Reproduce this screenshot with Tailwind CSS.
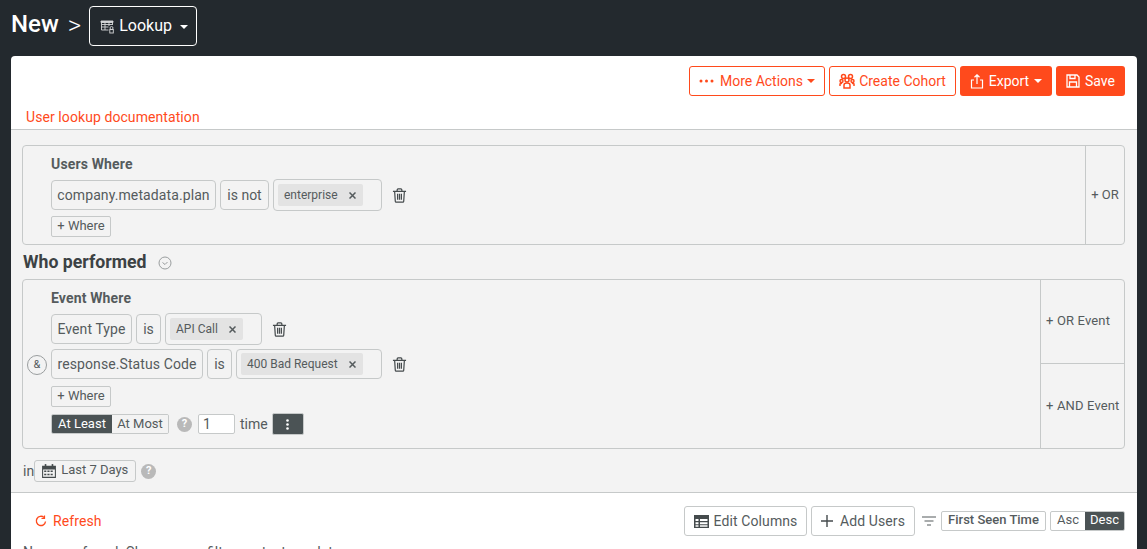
<!DOCTYPE html>
<html lang="en">
<head>
<meta charset="UTF-8">
<title>New Lookup</title>
<script src="https://cdn.jsdelivr.net/npm/@tailwindcss/browser@4"></script>
</head>
<body class="h-[549px] overflow-hidden bg-[#23292e] font-['Roboto',sans-serif] text-[#555b5d]">

<!-- Top bar -->
<div class="h-[56px] pl-[11px] pt-[6px] flex items-start">
  <span class="text-[24px] leading-[36px] font-medium text-white">New</span>
  <span class="text-[26px] leading-[38px] text-white ml-[9px] font-light">&gt;</span>
  <button class="ml-[8px] w-[108px] h-[40px] border border-white rounded-[4px] flex items-center pl-[10px] text-white text-[16px]">
    <svg class="w-[15px] h-[15px] mr-[4px]" viewBox="0 0 15 15" fill="none" stroke="#d4d6d7" stroke-width="0.900"><path d="M1 2h12v1.500H1z" fill="#d4d6d7"/><path d="M1.500 3v8h7M5 3v8M9 3v4M1.500 5.500h11M1.500 8h7M12.500 3v3"/><circle cx="11.500" cy="9" r="1.500"/><rect x="9.800" y="10.500" width="3.500" height="3.500"/></svg>
    Lookup
    <span class="ml-[8px] mt-[2px] border-x-[4px] border-x-transparent border-t-[4px] border-t-white"></span>
  </button>
</div>

<!-- Card -->
<div class="mr-[10px] ml-[11px] bg-white rounded-t-[4px] h-[493px] overflow-hidden">

  <div class="h-[74px] border-b border-[#c6c9c9] relative">
    <div class="flex justify-end gap-[4px] pt-[10px] pr-[12px] text-[14px]">
      <button class="h-[30px] w-[136px] border border-[#ff4a1c] rounded-[3px] text-[#ff4a1c] bg-white flex items-center justify-center">
        <svg class="w-[15px] h-[4px] mr-[6px]" viewBox="0 0 15 4" fill="#ff4a1c"><circle cx="2" cy="2" r="1.500"/><circle cx="7.500" cy="2" r="1.500"/><circle cx="13" cy="2" r="1.500"/></svg>
        More Actions
        <span class="ml-[4px] border-x-[4px] border-x-transparent border-t-[4px] border-t-[#ff4a1c]"></span>
      </button>
      <button class="h-[30px] w-[127px] border border-[#ff4a1c] rounded-[3px] text-[#ff4a1c] bg-white flex items-center justify-center">
        <svg class="w-[16px] h-[16px] mr-[4px]" viewBox="0 0 16 16" fill="none" stroke="#ff4a1c" stroke-width="1.500"><circle cx="4.500" cy="3.500" r="2"/><circle cx="11.500" cy="3.500" r="2"/><circle cx="8" cy="7" r="2"/><circle cx="2.500" cy="8" r="1.500"/><circle cx="13.500" cy="8" r="1.500"/><path d="M5 15v-3c0-1 1-2 3-2s3 1 3 2v3zM1 13v-2l2-1M15 13v-2l-2-1"/></svg>
        Create Cohort
      </button>
      <button class="h-[30px] w-[92px] rounded-[3px] text-white bg-[#ff4a1c] flex items-center justify-center">
        <svg class="w-[14px] h-[15px] mr-[5px]" viewBox="0 0 14 15" fill="none" stroke="#fff" stroke-width="1.200"><path d="M4 6H1.500v8h11V6H10M7 10V1M4.500 3.200 7 .8l2.500 2.400"/></svg>
        Export
        <span class="ml-[5px] border-x-[4px] border-x-transparent border-t-[4px] border-t-white"></span>
      </button>
      <button class="h-[30px] w-[69px] rounded-[3px] text-white bg-[#ff4a1c] flex items-center justify-center">
        <svg class="w-[14px] h-[14px] mr-[5px]" viewBox="0 0 14 14" fill="none" stroke="#fff" stroke-width="1.300"><path d="M1 1h10l2 2v10H1z"/><path d="M4 1v3.500h5V1M3.500 13V8h7v5"/></svg>
        Save
      </button>
    </div>
    <a class="absolute left-[15px] top-[53px] text-[14px] leading-[17px] tracking-[0.08px] text-[#ff4a1c]">User lookup documentation</a>
  </div>

  <!-- Query builder -->
  <div class="h-[363px] bg-[#f3f3f3] border-b border-[#c6c9c9] pl-[11px] pr-[12px] pt-[15px] text-[14px]">

    <div class="h-[100px] border border-[#c6c9c9] rounded-[4px] flex">
      <div class="flex-1 pl-[28px] pt-[10px]">
        <div class="leading-[16px] font-bold tracking-[0.15px] h-[23px]">Users Where</div>
        <div class="flex items-center gap-[4px] h-[32px]">
          <span class="h-[30px] w-[165px] flex items-center justify-center border border-[#c6c9c9] rounded-[4px] tracking-[0.1px]">company.metadata.plan</span>
          <span class="h-[30px] w-[49px] flex items-center justify-center border border-[#c6c9c9] rounded-[4px]">is not</span>
          <span class="h-[32px] w-[109px] pl-[4px] flex items-center border border-[#c6c9c9] rounded-[4px]">
            <span class="h-[22px] w-[85px] bg-[#e3e3e3] rounded-[2px] text-[12px] pl-[6px] pr-[7px] flex items-center justify-between">enterprise
              <svg class="w-[7px] h-[7px]" viewBox="0 0 7 7" stroke="#555b5d" stroke-width="1.500"><path d="m.5.500 6 6M6.500.500l-6 6"/></svg>
            </span>
          </span>
          <svg class="w-[15px] h-[17px] ml-[6px]" viewBox="0 0 16 17" fill="none" stroke="#454b4d" stroke-width="1.300"><path d="M1 4h14M5.500 4V2.500c0-.6.400-1 1-1h3c.6 0 1 .4 1 1V4M2.800 4l.7 10.500c0 .6.500 1 1 1h7c.5 0 1-.4 1-1L13.200 4M6 6.500v6.500M8 6.500v6.500M10 6.500v6.500"/></svg>
        </div>
        <div class="mt-[5px] h-[21px] w-[60px] flex items-center justify-center border border-[#c6c9c9] rounded-[2px] text-[13px] pb-[2px]">+ Where</div>
      </div>
      <div class="w-[39px] border-l border-[#c6c9c9] flex items-center justify-center text-[13px]">+ OR</div>
    </div>

    <div class="h-[34px] flex items-center pl-[1px] font-bold text-[17.7px] text-[#3c4244]">
      Who performed
      <svg class="w-[14px] h-[14px] ml-[11px] mt-[2px]" viewBox="0 0 14 14" fill="none" stroke="#9a9e9f"><circle cx="7" cy="7" r="6"/><path d="m4.500 6.500 2.500 2 2.500-2.500"/></svg>
    </div>

    <div class="h-[170px] border border-[#c6c9c9] rounded-[4px] flex">
      <div class="flex-1 pl-[28px] pt-[10px] relative">
        <div class="leading-[16px] font-bold tracking-[0.15px] h-[23px]">Event Where</div>
        <div class="flex items-center gap-[4px] h-[32px]">
          <span class="h-[30px] w-[81px] flex items-center justify-center border border-[#c6c9c9] rounded-[4px] tracking-[0.1px]">Event Type</span>
          <span class="h-[30px] w-[25px] flex items-center justify-center border border-[#c6c9c9] rounded-[4px]">is</span>
          <span class="h-[32px] w-[97px] pl-[4px] flex items-center border border-[#c6c9c9] rounded-[4px]">
            <span class="h-[22px] w-[73px] bg-[#e3e3e3] rounded-[2px] text-[12px] pl-[6px] pr-[7px] flex items-center justify-between">API Call
              <svg class="w-[7px] h-[7px]" viewBox="0 0 7 7" stroke="#555b5d" stroke-width="1.500"><path d="m.5.500 6 6M6.500.500l-6 6"/></svg>
            </span>
          </span>
          <svg class="w-[15px] h-[17px] ml-[6px]" viewBox="0 0 16 17" fill="none" stroke="#454b4d" stroke-width="1.300"><path d="M1 4h14M5.500 4V2.500c0-.6.400-1 1-1h3c.6 0 1 .4 1 1V4M2.800 4l.7 10.500c0 .6.500 1 1 1h7c.5 0 1-.4 1-1L13.200 4M6 6.500v6.500M8 6.500v6.500M10 6.500v6.500"/></svg>
        </div>
        <div class="flex items-center gap-[4px] h-[32px] mt-[3px]">
          <span class="h-[30px] w-[152px] flex items-center justify-center border border-[#c6c9c9] rounded-[4px] tracking-[0.1px]">response.Status Code</span>
          <span class="h-[30px] w-[25px] flex items-center justify-center border border-[#c6c9c9] rounded-[4px]">is</span>
          <span class="h-[30px] w-[146px] pl-[4px] flex items-center border border-[#c6c9c9] rounded-[4px]">
            <span class="h-[22px] w-[122px] bg-[#e3e3e3] rounded-[2px] text-[12px] pl-[6px] pr-[7px] flex items-center justify-between">400 Bad Request
              <svg class="w-[7px] h-[7px]" viewBox="0 0 7 7" stroke="#555b5d" stroke-width="1.500"><path d="m.5.500 6 6M6.500.500l-6 6"/></svg>
            </span>
          </span>
          <svg class="w-[15px] h-[17px] ml-[6px]" viewBox="0 0 16 17" fill="none" stroke="#454b4d" stroke-width="1.300"><path d="M1 4h14M5.500 4V2.500c0-.6.400-1 1-1h3c.6 0 1 .4 1 1V4M2.800 4l.7 10.500c0 .6.500 1 1 1h7c.5 0 1-.4 1-1L13.200 4M6 6.500v6.500M8 6.500v6.500M10 6.500v6.500"/></svg>
        </div>
        <span class="absolute left-[4px] top-[75px] w-[20px] h-[20px] rounded-full border border-[#9a9e9f] flex items-center justify-center text-[11px]">&amp;</span>
        <div class="mt-[6px] h-[21px] w-[60px] flex items-center justify-center border border-[#c6c9c9] rounded-[2px] text-[13px] pb-[2px]">+ Where</div>
        <div class="flex items-center mt-[6px] h-[22px]">
          <div class="flex h-[20px] w-[118px] border border-[#c6c9c9] rounded-[2px] text-[13px] overflow-hidden">
            <span class="w-[60px] bg-[#4b5355] text-white flex items-center justify-center">At Least</span>
            <span class="flex-1 bg-[#f3f3f3] flex items-center justify-center">At Most</span>
          </div>
          <span class="ml-[8px] w-[15px] h-[15px] rounded-full bg-[#b9b9b9] text-white text-[11px] font-bold flex items-center justify-center">?</span>
          <span class="ml-[6px] w-[37px] h-[20px] bg-white border border-[#c6c9c9] rounded-[2px] text-[14px] pl-[4px] flex items-center">1</span>
          <span class="ml-[5px] text-[14px]">time</span>
          <span class="ml-[4px] w-[32px] h-[22px] bg-[#4b5355] border border-[#c6c9c9] rounded-[2px] flex items-center justify-center">
            <svg class="w-[3px] h-[11px]" viewBox="0 0 3 11" fill="#fff"><circle cx="1.500" cy="1.500" r="1.300"/><circle cx="1.500" cy="5.500" r="1.300"/><circle cx="1.500" cy="9.500" r="1.300"/></svg>
          </span>
        </div>
      </div>
      <div class="w-[84px] border-l border-[#c6c9c9] flex flex-col text-[13px] tracking-[0.15px]">
        <div class="h-[84px] border-b border-[#c6c9c9] flex items-center pl-[5px] pb-[2px]">+ OR Event</div>
        <div class="flex-1 flex items-center pl-[5px]">+ AND Event</div>
      </div>
    </div>

    <div class="flex items-center h-[22px] mt-[11px] pl-[1px]">
      <span>in</span>
      <span class="w-[102px] h-[22px] border border-[#c6c9c9] rounded-[3px] flex items-center pl-[6px] text-[13px]">
        <svg class="w-[16px] h-[16px] mr-[4px]" viewBox="0 0 15 15" fill="#454b4d"><path d="M1 2.500h13V14H1zM2 6v7h11V6z" fill-rule="evenodd"/><rect x="3.500" y="1" width="1.500" height="3"/><rect x="10" y="1" width="1.500" height="3"/><path d="M3 7h2v1.500H3zM6 7h2v1.500H6zM9 7h2v1.500H9zM3 10h2v1.500H3zM6 10h2v1.500H6zM9 10h2v1.500H9z"/></svg>
        <span class="-mt-[2px]">Last 7 Days</span>
      </span>
      <span class="ml-[5px] w-[15px] h-[15px] rounded-full bg-[#b9b9b9] text-white text-[11px] font-bold flex items-center justify-center">?</span>
    </div>
  </div>

  <!-- Results -->
  <div class="relative">
    <div class="flex items-center h-[30px] mt-[13px] pl-[24px] pr-[12px]">
      <svg class="w-[12px] h-[12px] mr-[6px]" viewBox="0 0 12 12" fill="none" stroke="#ff4a1c" stroke-width="1.400"><path d="M10.500 6.500A4.600 4.600 0 1 1 9 2.500"/><path d="M9.500 .5v3h-3" stroke-width="1.200"/></svg>
      <span class="text-[14px] tracking-[0.1px] text-[#ff4a1c]">Refresh</span>
      <div class="flex-1"></div>
      <button class="h-[30px] w-[123px] border border-[#c6c9c9] rounded-[3px] text-[14px] tracking-[0.1px] flex items-center justify-center">
        <svg class="w-[15px] h-[13px] mr-[5px]" viewBox="0 0 15 13" fill="#454b4d"><path fill-rule="evenodd" d="M0 0h15v13H0zM1.500 4v2h3V4zM6 4v2h7.500V4zM1.500 7.200v2h3v-2zM6 7.200v2h7.500v-2zM1.500 10.300v1.500h3v-1.500zM6 10.300v1.500h7.500v-1.500z"/></svg>
        Edit Columns
      </button>
      <button class="ml-[4px] h-[30px] w-[104px] border border-[#c6c9c9] rounded-[3px] text-[14px] tracking-[0.1px] flex items-center justify-center">
        <svg class="w-[12px] h-[12px] mr-[7px]" viewBox="0 0 12 12" stroke="#454b4d" stroke-width="1.400"><path d="M6 0v12M0 6h12"/></svg>
        Add Users
      </button>
      <svg class="ml-[7px] w-[14px] h-[10px]" viewBox="0 0 14 10" stroke="#555b5d" stroke-width="1.200"><path d="M0 1h14M2.500 5h9M5 9h4"/></svg>
      <span class="ml-[5px] h-[20px] w-[105px] border border-[#c6c9c9] rounded-[2px] flex items-center justify-center text-[13px] font-medium pb-[2px]">First Seen Time</span>
      <div class="ml-[4px] flex h-[20px] w-[75px] border border-[#c6c9c9] rounded-[2px] text-[13px] overflow-hidden">
        <span class="w-[34px] flex items-center justify-center pb-[2px]">Asc</span>
        <span class="flex-1 bg-[#4b5355] text-white flex items-center justify-center pb-[2px]">Desc</span>
      </div>
    </div>
    <p class="pl-[12px] mt-[8px] text-[14px] leading-[16px]">No users found. Change your filters or try to update.</p>
  </div>
</div>
</body>
</html>
